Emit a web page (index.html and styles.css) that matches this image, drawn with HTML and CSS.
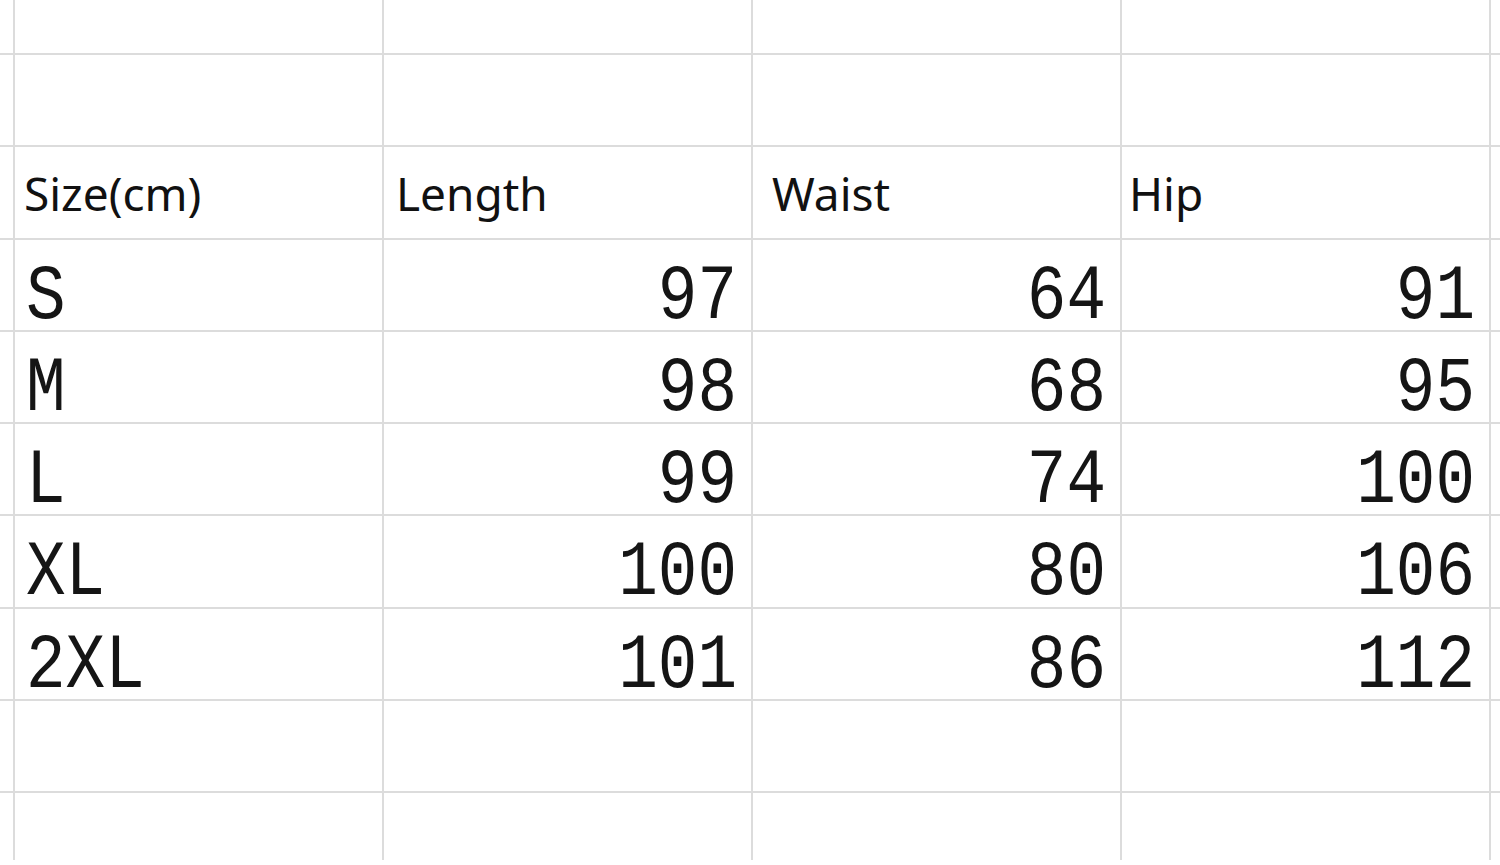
FILE: index.html
```html
<!DOCTYPE html>
<html lang="en">
<head>
<meta charset="utf-8">
<title>Size chart</title>
<link rel="stylesheet" href="styles.css">
</head>
<body>
<div class="sheet">
  <div class="c"></div><div class="c"></div><div class="c"></div><div class="c"></div><div class="c"></div><div class="c"></div>
  <div class="c"></div><div class="c"></div><div class="c"></div><div class="c"></div><div class="c"></div><div class="c"></div>

  <div class="c"></div>
  <div class="c hd"><span>Size(cm)</span></div>
  <div class="c hd h-len"><span>Length</span></div>
  <div class="c hd h-waist"><span>Waist</span></div>
  <div class="c hd h-hip"><span>Hip</span></div>
  <div class="c"></div>

  <div class="c"></div>
  <div class="c sz"><span>S</span></div>
  <div class="c num"><span>97</span></div>
  <div class="c num"><span>64</span></div>
  <div class="c num"><span>91</span></div>
  <div class="c"></div>

  <div class="c"></div>
  <div class="c sz"><span>M</span></div>
  <div class="c num"><span>98</span></div>
  <div class="c num"><span>68</span></div>
  <div class="c num"><span>95</span></div>
  <div class="c"></div>

  <div class="c"></div>
  <div class="c sz"><span>L</span></div>
  <div class="c num"><span>99</span></div>
  <div class="c num"><span>74</span></div>
  <div class="c num"><span>100</span></div>
  <div class="c"></div>

  <div class="c"></div>
  <div class="c sz"><span>XL</span></div>
  <div class="c num"><span>100</span></div>
  <div class="c num"><span>80</span></div>
  <div class="c num"><span>106</span></div>
  <div class="c"></div>

  <div class="c"></div>
  <div class="c sz"><span>2XL</span></div>
  <div class="c num"><span>101</span></div>
  <div class="c num"><span>86</span></div>
  <div class="c num"><span>112</span></div>
  <div class="c"></div>

  <div class="c"></div><div class="c"></div><div class="c"></div><div class="c"></div><div class="c"></div><div class="c"></div>
  <div class="c"></div><div class="c"></div><div class="c"></div><div class="c"></div><div class="c"></div><div class="c"></div>
</div>
</body>
</html>
```
FILE: styles.css
```css
html, body {
  margin: 0;
  padding: 0;
  background: #ffffff;
}

body {
  width: 1500px;
  height: 865px;
  overflow: hidden;
  font-family: "Noto Sans", "Open Sans", sans-serif;
  color: #111111;
}

.sheet {
  display: grid;
  width: 1500px;
  height: 860px;
  grid-template-columns: 13px 367px 367px 367px 367px 1fr;
  grid-template-rows: 53px repeat(8, 90.3px) 1fr;
  gap: 2px;
  background: #dcdcdc;
}

.c {
  background: #ffffff;
  display: flex;
  align-items: flex-start;
  min-width: 0;
}

.hd {
  padding: 15px 0 0 9px;
  font-size: 46px;
  line-height: normal;
  white-space: nowrap;
}

.h-len { padding-left: 12px; }
.h-waist { padding-left: 19px; }
.h-hip { padding-left: 7px; }

.sz,
.num {
  padding-top: 20px;
  font-family: "Liberation Mono", "DejaVu Sans Mono", monospace;
  font-size: 66px;
  line-height: 76px;
  color: #151515;
  white-space: nowrap;
}

.sz span,
.num span {
  display: inline-block;
  transform: scale(1, 1.17);
  transform-origin: center;
}

.sz {
  padding-left: 11px;
}

.num {
  justify-content: flex-end;
  padding-right: 14px;
}
```
